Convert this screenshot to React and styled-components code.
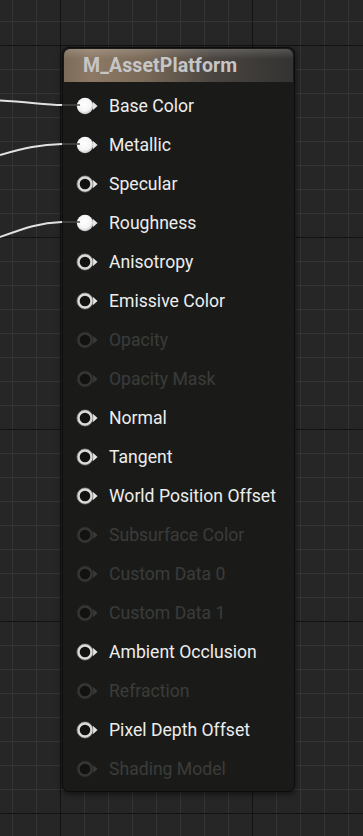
import styled, { createGlobalStyle } from "styled-components";

const GlobalStyle = createGlobalStyle`
    html, body {
        margin: 0;
        padding: 0;
    }
    body {
        width: 363px;
        height: 836px;
        overflow: hidden;
        font-family: Roboto, "Noto Sans", sans-serif;
    }
`

const pins = [
    { label: "Base Color", state: "linked" },
    { label: "Metallic", state: "linked" },
    { label: "Specular", state: "open" },
    { label: "Roughness", state: "linked" },
    { label: "Anisotropy", state: "open" },
    { label: "Emissive Color", state: "open" },
    { label: "Opacity", state: "off" },
    { label: "Opacity Mask", state: "off" },
    { label: "Normal", state: "open" },
    { label: "Tangent", state: "open" },
    { label: "World Position Offset", state: "open" },
    { label: "Subsurface Color", state: "off" },
    { label: "Custom Data 0", state: "off" },
    { label: "Custom Data 1", state: "off" },
    { label: "Ambient Occlusion", state: "open" },
    { label: "Refraction", state: "off" },
    { label: "Pixel Depth Offset", state: "open" },
    { label: "Shading Model", state: "off" },
]

function PinIcon({ state }) {
    const off = state === "off"
    return (
        <svg width="24" height="18" viewBox="0 0 24 18">
            <defs>
                <radialGradient id="ball" cx="45%" cy="40%" r="60%">
                    <stop offset="0" stopColor="#ffffff" />
                    <stop offset="0.7" stopColor="#f4f4f4" />
                    <stop offset="1" stopColor="#c4c4c4" />
                </radialGradient>
            </defs>
            <path d="M16.8 4.8 L21.6 9 L16.8 13.2 Z" fill={off ? "#3a3b39" : "#e6e6e6"} />
            {state === "linked" ? (
                <circle cx="9" cy="9" r="8.2" fill="url(#ball)" />
            ) : (
                <>
                    <circle cx="9" cy="9" r="6.6" fill="#121311" stroke={off ? "#353634" : "#dadada"} strokeWidth="2.6" />
                    <circle cx="9" cy="9" r="8.1" fill="none" stroke={off ? "#272826" : "#8a8a8a"} strokeWidth="0.6" />
                </>
            )}
        </svg>
    )
}

export default function App() {
    return (
        <Canvas>
            <GlobalStyle />
            <Wires width="363" height="836" viewBox="0 0 363 836">
                <path d="M0 100.5 C30 102, 45 105, 62 105" />
                <path d="M0 155 C25 148, 40 144.5, 62 144" />
                <path d="M0 237 C25 228, 40 222.5, 62 222" />
                <g className="stub">
                    <line x1="62" y1="105" x2="80" y2="105" />
                    <line x1="62" y1="144" x2="80" y2="144" />
                    <line x1="62" y1="222" x2="80" y2="222" />
                </g>
            </Wires>

            <Node>
                <Header>
                    <Title>M_AssetPlatform</Title>
                </Header>
                <PinList>
                    {pins.map((p) => (
                        <PinRow key={p.label}>
                            <PinIcon state={p.state} />
                            <PinLabel $off={p.state === "off"}>{p.label}</PinLabel>
                        </PinRow>
                    ))}
                </PinList>
            </Node>
        </Canvas>
    )
}

/* Graph canvas */

const Canvas = styled.div`
    position: relative;
    width: 363px;
    height: 836px;
    overflow: hidden;
    background-color: #262626;
    background-image:
        linear-gradient(to right, #131313 0 1.5px, transparent 1.5px),
        linear-gradient(to bottom, #131313 0 1.5px, transparent 1.5px),
        linear-gradient(to right, #353535 0 1px, transparent 1px),
        linear-gradient(to bottom, #353535 0 1px, transparent 1px);
    background-size: 192px 192px, 192px 192px, 24px 24px, 24px 24px;
    background-position: 60px 45px, 60px 45px, 12px 21px, 12px 21px;
`

const Wires = styled.svg`
    position: absolute;
    left: 0;
    top: 0;
    z-index: 2;
    pointer-events: none;

    & > path {
        fill: none;
        stroke: #e2e2e2;
        stroke-width: 2;
    }

    & .stub line {
        stroke: #4a4b49;
        stroke-width: 1.5;
    }
`

/* Node */

const Node = styled.div`
    position: absolute;
    left: 62px;
    top: 47px;
    width: 233px;
    height: 745px;
    box-sizing: border-box;
    background: #1a1b19;
    border: 1px solid #0c0c0c;
    border-radius: 7px;
    box-shadow: 0 2px 6px rgba(0, 0, 0, 0.55);
    padding: 1px;
    display: flex;
    flex-direction: column;
`

const Header = styled.div`
    height: 33px;
    border-radius: 6px 6px 0 0;
    background:
        linear-gradient(to bottom, rgba(255, 255, 255, 0.16), rgba(255, 255, 255, 0) 30%),
        linear-gradient(to right, #7c6b59 0%, #8d7965 12%, #7a6a58 35%, #4a4541 65%, #333331 100%);
    display: flex;
    align-items: center;
    padding-left: 19px;
`

const Title = styled.div`
    color: #c6c6c6;
    font-size: 19.5px;
    font-weight: 700;
    letter-spacing: 0.1px;
`

const PinList = styled.div`
    flex: 1;
    padding: 4px 0 0 12px;
    display: flex;
    flex-direction: column;
`

const PinRow = styled.div`
    height: 39px;
    display: flex;
    align-items: center;
    gap: 9px;

    & > svg {
        flex: none;
    }
`

const PinLabel = styled.span`
    color: ${(p) => (p.$off ? "#3b3c3a" : "#ededed")};
    font-size: 17.6px;
    white-space: nowrap;
`
